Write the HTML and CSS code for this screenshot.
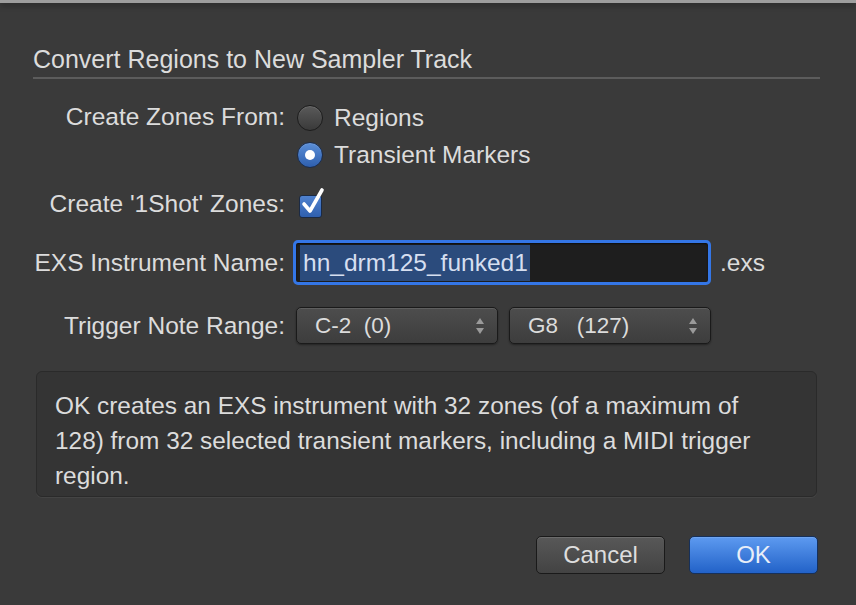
FILE: index.html
```html
<!DOCTYPE html>
<html lang="en">
<head>
    <meta charset="UTF-8">
    <title>Convert Regions to New Sampler Track</title>
    <link rel="stylesheet" href="styles.css">
</head>
<body>

    <div class="top-edge"></div>

    <div class="dialog">
        <div class="title">Convert Regions to New Sampler Track</div>

        <div class="row row-radios">
            <div class="label">Create Zones From:</div>
            <div class="radio-group">
                <div class="radio-option">
                    <span class="radio"></span>
                    <span>Regions</span>
                </div>
                <div class="radio-option">
                    <span class="radio checked"></span>
                    <span>Transient Markers</span>
                </div>
            </div>
        </div>

        <div class="row row-check">
            <div class="label">Create '1Shot' Zones:</div>
            <span class="checkbox">
                <svg width="26" height="30" viewBox="0 0 26 30">
                    <path d="M4 17 L10 24 L22 3" fill="none" stroke="#fff" stroke-width="3.6" stroke-linecap="round" stroke-linejoin="round"/>
                </svg>
            </span>
        </div>

        <div class="row row-name">
            <div class="label">EXS Instrument Name:</div>
            <div class="name-field"><span class="selected">hn_drm125_funked1</span></div>
            <span class="suffix">.exs</span>
        </div>

        <div class="row row-range">
            <div class="label">Trigger Note Range:</div>
            <div class="popup">
                <span class="popup-value">C-2  (0)</span>
                <span class="arrows"><i class="up"></i><i class="down"></i></span>
            </div>
            <div class="popup">
                <span class="popup-value">G8   (127)</span>
                <span class="arrows"><i class="up"></i><i class="down"></i></span>
            </div>
        </div>

        <div class="info">
            OK creates an EXS instrument with 32 zones (of a maximum of 128) from 32 selected transient markers, including a MIDI trigger region.
        </div>

        <div class="buttons">
            <button class="btn">Cancel</button>
            <button class="btn btn-default">OK</button>
        </div>
    </div>

</body>
</html>
```

FILE: styles.css
```css
body {
    margin: 0;
    background-color: #3a3a3a;
    font-family: "Liberation Sans", Arial, sans-serif;
    color: #dcdcdc;
    height: 605px;
    overflow: hidden;
}

.top-edge {
    height: 3px;
    background-color: #9e9e9e;
    box-shadow: 0 2px 6px rgba(0, 0, 0, 0.45);
}

.dialog {
    padding: 42px 36px 0 33px;
}

.title {
    font-size: 25px;
    line-height: 28px;
    padding-bottom: 4px;
    border-bottom: 2px solid #5c5c5c;
}

.row {
    display: flex;
    align-items: center;
}

.label {
    width: 252px;
    text-align: right;
    font-size: 24.5px;
    flex-shrink: 0;
}

.row-radios {
    align-items: flex-start;
    margin-top: 20px;
}

.row-radios .label {
    line-height: 36px;
}

.radio-group {
    margin-left: 12px;
}

.radio-option {
    display: flex;
    align-items: center;
    height: 37px;
    font-size: 24.5px;
}

.radio {
    width: 24px;
    height: 24px;
    border-radius: 50%;
    border: 1px solid #1c1c1c;
    background: linear-gradient(#5a5a5a, #3a3a3a);
    box-shadow: inset 0 1px 1px rgba(255, 255, 255, 0.12);
    margin-right: 11px;
    position: relative;
}

.radio.checked {
    background: linear-gradient(#5b8fd8, #2e5fae);
    border-color: #1a2c4c;
}

.radio.checked::after {
    content: "";
    position: absolute;
    left: 7px;
    top: 7px;
    width: 10px;
    height: 10px;
    border-radius: 50%;
    background-color: #fff;
}

.row-check {
    margin-top: 13px;
    height: 36px;
}

.checkbox {
    margin-left: 14px;
    width: 21px;
    height: 21px;
    border: 1px solid #1b2a44;
    border-radius: 3px;
    background: linear-gradient(#4f82cf, #2f5fae);
    position: relative;
    margin-top: 4px;
}

.checkbox svg {
    position: absolute;
    left: 0;
    top: -9px;
}

.row-name {
    margin-top: 18px;
}

.name-field {
    margin-left: 8px;
    width: 408px;
    height: 39px;
    border: 3px solid #3476e6;
    border-radius: 5px;
    background-color: #1e1e1e;
    box-shadow: inset 0 1px 2px rgba(0, 0, 0, 0.6);
    display: flex;
    align-items: center;
    padding-left: 4px;
    font-size: 24.5px;
}

.selected {
    background-color: #2b4b7c;
    color: #d6dff0;
    padding: 4px 0 4px 3px;
    width: 227px;
    line-height: 28px;
}

.suffix {
    margin-left: 9px;
    font-size: 24.5px;
}

.row-range {
    margin-top: 22px;
}

.popup {
    height: 35px;
    margin-left: 11px;
    border: 1px solid #1a1a1a;
    border-radius: 5px;
    background: linear-gradient(#4d4d4d, #3d3d3d);
    box-shadow: inset 0 1px 0 rgba(255, 255, 255, 0.1), 0 1px 2px rgba(0, 0, 0, 0.4);
    display: flex;
    align-items: center;
    justify-content: space-between;
    padding: 0 13px 0 18px;
    width: 169px;
    font-size: 22.5px;
}

.popup-value {
    white-space: pre;
}

.arrows {
    display: flex;
    flex-direction: column;
    gap: 4px;
}

.arrows i {
    width: 0;
    height: 0;
    border-left: 4px solid transparent;
    border-right: 4px solid transparent;
}

.arrows .up {
    border-bottom: 6px solid #9a9a9a;
}

.arrows .down {
    border-top: 6px solid #9a9a9a;
}

.info {
    margin: 27px 3px 0 3px;
    height: 108px;
    border: 1px solid #2a2a2a;
    border-radius: 6px;
    background-color: #343434;
    box-shadow: 0 1px 0 rgba(255, 255, 255, 0.05);
    padding: 16px 24px 0 18px;
    font-size: 24.4px;
    line-height: 35px;
}

.buttons {
    display: flex;
    justify-content: flex-end;
    gap: 24px;
    margin-top: 39px;
    margin-right: 2px;
}

.btn {
    width: 129px;
    height: 38px;
    border: 1px solid #1a1a1a;
    border-radius: 5px;
    background: linear-gradient(#585858, #434343);
    box-shadow: inset 0 1px 0 rgba(255, 255, 255, 0.12);
    color: #dedede;
    font-family: "Liberation Sans", Arial, sans-serif;
    font-size: 24px;
    padding: 0;
}

.btn-default {
    background: linear-gradient(#5d9af0, #2262c8);
    border-color: #16305a;
    color: #e8eef8;
}
```
